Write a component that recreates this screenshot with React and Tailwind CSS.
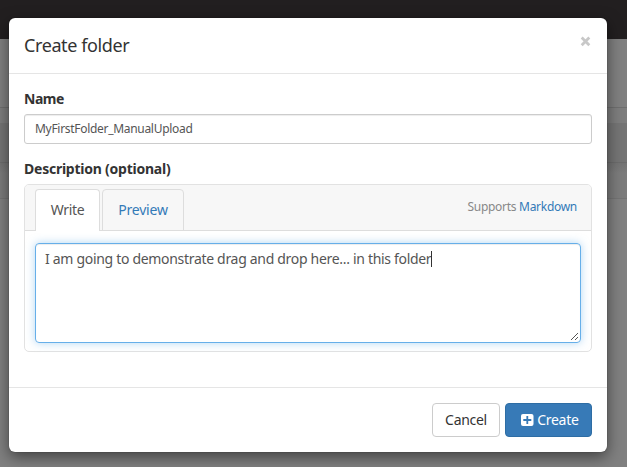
function Backdrop() {
  return (
    <div className="col-start-1 row-start-1 flex flex-col bg-[#808080]">
      <div className="h-[39px] bg-[#221f20]" />
      <div className="h-[69px] border-b border-[#6f6f6f]" />
      <div className="h-[15px] bg-[#7e7e7e]" />
      <div className="h-10 border-b border-[#6c6c6c] bg-[#757575]" />
      <div className="h-9 border-b border-[#747474] bg-gradient-to-b from-[#747474] to-[#7c7c7c] to-30%" />
    </div>
  );
}

function Header() {
  return (
    <div className="flex h-14 items-start justify-between border-b border-[#e5e5e5] px-[15px] pt-[15px]">
      <h4 className="text-[18px] leading-[25px] tracking-[-0.4px]">Create folder</h4>
      <button aria-label="Close" className="mt-[3px] mr-[1px]">
        <svg width="11" height="11" viewBox="0 0 11 11" fill="none" stroke="#c8c8c8" strokeWidth="2.8">
          <path d="M1.7 1.6 9.3 9.2M9.3 1.6 1.7 9.2" />
        </svg>
      </button>
    </div>
  );
}

function Editor() {
  return (
    <div className="h-[168px] rounded-[5px] border border-[#e2e2e2]">
      <div className="flex h-[46px] items-end rounded-t bg-[#f7f7f7] px-[10px] shadow-[inset_0_-1px_0_#dddddd]">
        <div className="mr-[2px] h-[42px] w-[65px] rounded-t border border-b-0 border-[#dddddd] bg-white pt-[10px] text-center leading-5 tracking-[-0.3px] text-[#555555]">Write</div>
        <div className="h-[42px] w-[82px] rounded-t border border-[#dddddd] pt-[10px] text-center leading-5 tracking-[-0.2px] text-[#337ab7]">Preview</div>
        <div className="mb-[14px] ml-auto mr-[4px] text-[12px] leading-5 tracking-[-0.29px] text-[#888888]">
          Supports <a className="text-[#337ab7]">Markdown</a>
        </div>
      </div>
      <div className="mx-[10px] mt-[12px] flex h-[100px] flex-col justify-between rounded border border-[#66afe9] pl-[9px] pt-[5px] text-[#555555] shadow-[inset_0_1px_1px_rgba(0,0,0,0.075),0_0_8px_rgba(102,175,233,0.5)]">
        <div className="flex items-center leading-5">
          <span className="tracking-[-0.31px]">I am going to demonstrate drag and drop here... in this folder</span>
          <span className="h-4 w-px bg-[#333333]" />
        </div>
        <svg className="mr-[1px] mb-[1px] self-end" width="9" height="9" viewBox="0 0 9 9" stroke="#555555" strokeWidth="1">
          <path d="M1 8 8 1M5 8 8 5" />
        </svg>
      </div>
    </div>
  );
}

export default function App() {
  return (
    <div className="grid h-[467px] w-[627px] overflow-hidden font-['Noto_Sans',sans-serif] text-[14px] text-[#333333]">
      <Backdrop />
      <div className="relative col-start-1 row-start-1 mt-[18px] ml-[9px] flex h-[434px] w-[598px] flex-col rounded-[6px] bg-white shadow-[0_5px_15px_rgba(0,0,0,0.5),0_0_1px_rgba(0,0,0,0.6)]">
        <Header />
        <div className="h-[313px] px-[15px] pt-[15px]">
          <label className="block h-[25px] font-bold leading-5 tracking-[-0.5px]">Name</label>
          <div className="mb-[15px] h-[30px] rounded-[3px] border border-[#cccccc] px-[10px] pt-[5px] text-[12px] leading-[18px] tracking-[-0.3px] text-[#555555] shadow-[inset_0_1px_1px_rgba(0,0,0,0.075)]">MyFirstFolder_ManualUpload</div>
          <label className="block h-[25px] font-bold leading-5 tracking-[-0.24px]">Description (optional)</label>
          <Editor />
        </div>
        <div className="flex h-[65px] justify-end gap-[5px] border-t border-[#e5e5e5] px-[15px] pt-[15px]">
          <button className="h-[34px] w-[68px] rounded border border-[#cccccc] leading-5 tracking-[-0.3px]">Cancel</button>
          <button className="flex h-[34px] w-[87px] items-center justify-end gap-[3px] rounded border border-[#2e6da4] bg-[#377ab7] pr-[12.5px] leading-5 text-white">
            <svg width="13" height="12" viewBox="0 0 13 12">
              <rect width="12.5" height="12" rx="2" fill="#fff" />
              <path d="M6.3 2v8M2.3 6h8" stroke="#377ab7" strokeWidth="1.8" />
            </svg>
            <span className="tracking-[-0.3px]">Create</span>
          </button>
        </div>
      </div>
    </div>
  );
}
